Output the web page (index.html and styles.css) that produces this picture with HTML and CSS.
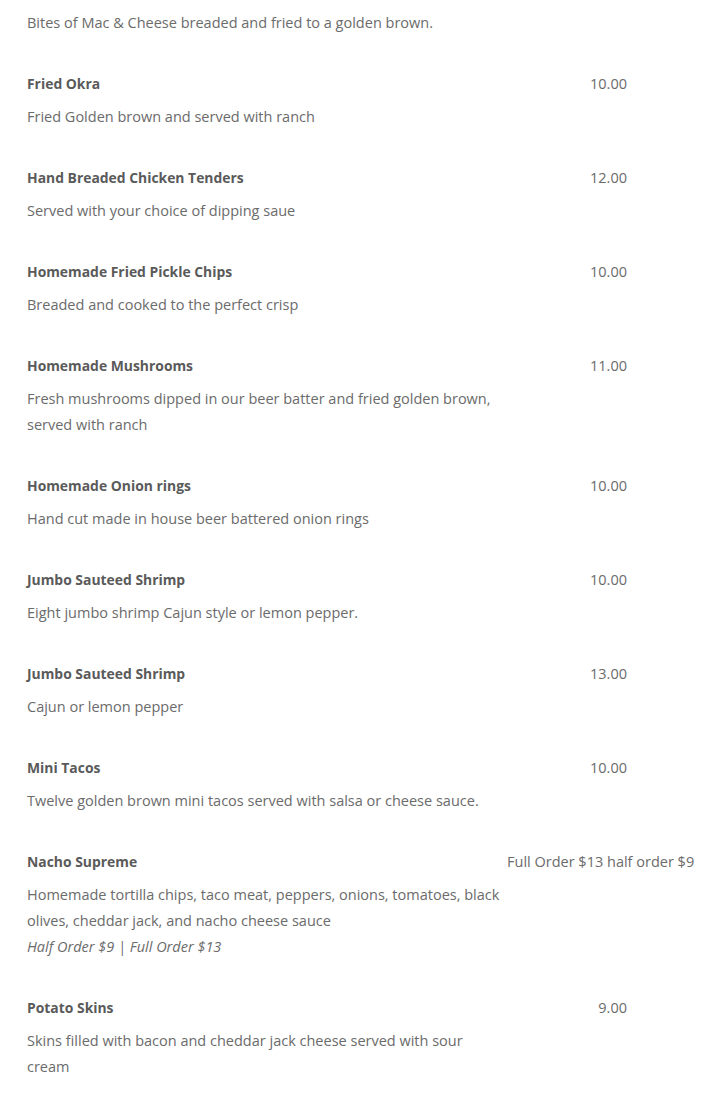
FILE: index.html
```html
<!DOCTYPE html>
<html>
<head>
<meta charset="utf-8">
<link rel="stylesheet" href="styles.css">
</head>
<body>
<div class="menu">
  <div class="item item-cut">
    <div class="item-body">
      <p class="desc">Bites of Mac &amp; Cheese breaded and fried to a golden brown.</p>
    </div>
  </div>
  <div class="item">
    <div class="item-body">
      <h3 class="title">Fried Okra</h3>
      <p class="desc">Fried Golden brown and served with ranch</p>
    </div>
    <div class="price">10.00</div>
  </div>
  <div class="item">
    <div class="item-body">
      <h3 class="title">Hand Breaded Chicken Tenders</h3>
      <p class="desc">Served with your choice of dipping saue</p>
    </div>
    <div class="price">12.00</div>
  </div>
  <div class="item">
    <div class="item-body">
      <h3 class="title">Homemade Fried Pickle Chips</h3>
      <p class="desc">Breaded and cooked to the perfect crisp</p>
    </div>
    <div class="price">10.00</div>
  </div>
  <div class="item">
    <div class="item-body">
      <h3 class="title">Homemade Mushrooms</h3>
      <p class="desc">Fresh mushrooms dipped in our beer batter and fried golden brown, served with ranch</p>
    </div>
    <div class="price">11.00</div>
  </div>
  <div class="item">
    <div class="item-body">
      <h3 class="title">Homemade Onion rings</h3>
      <p class="desc">Hand cut made in house beer battered onion rings</p>
    </div>
    <div class="price">10.00</div>
  </div>
  <div class="item">
    <div class="item-body">
      <h3 class="title">Jumbo Sauteed Shrimp</h3>
      <p class="desc">Eight jumbo shrimp Cajun style or lemon pepper.</p>
    </div>
    <div class="price">10.00</div>
  </div>
  <div class="item">
    <div class="item-body">
      <h3 class="title">Jumbo Sauteed Shrimp</h3>
      <p class="desc">Cajun or lemon pepper</p>
    </div>
    <div class="price">13.00</div>
  </div>
  <div class="item">
    <div class="item-body">
      <h3 class="title">Mini Tacos</h3>
      <p class="desc">Twelve golden brown mini tacos served with salsa or cheese sauce.</p>
    </div>
    <div class="price">10.00</div>
  </div>
  <div class="item">
    <div class="item-body">
      <h3 class="title">Nacho Supreme</h3>
      <p class="desc">Homemade tortilla chips, taco meat, peppers, onions, tomatoes, black olives, cheddar jack, and nacho cheese sauce</p>
      <p class="note">Half Order $9 | Full Order $13</p>
    </div>
    <div class="price">Full Order $13 half order $9</div>
  </div>
  <div class="item">
    <div class="item-body">
      <h3 class="title">Potato Skins</h3>
      <p class="desc">Skins filled with bacon and cheddar jack cheese served with sour cream</p>
    </div>
    <div class="price">9.00</div>
  </div>
</div>
</body>
</html>
```

FILE: styles.css
```css
html, body {
  margin: 0;
  padding: 0;
  background: #ffffff;
}

body {
  font-family: "Open Sans", "Liberation Sans", sans-serif;
  font-size: 14.5px;
  line-height: 26px;
  color: #666666;
  overflow: hidden;
}

.menu {
  padding: 10px 0 0 27px;
  display: flex;
  flex-direction: column;
  gap: 35px;
}

.item {
  display: flex;
  align-items: flex-start;
}

.item-body {
  width: 475px;
  margin-right: 5px;
  flex: none;
}

.title {
  margin: 0 0 7px 0;
  font-size: 13.9px;
  line-height: 26px;
  font-weight: 700;
  color: #5a5a5a;
}

.desc {
  margin: 0;
  color: #6b6b6b;
}

.note {
  margin: 0;
  font-style: italic;
  color: #6b6b6b;
}

.price {
  width: 120px;
  flex: none;
  text-align: right;
  white-space: nowrap;
  color: #6b6b6b;
  line-height: 26px;
}
```
